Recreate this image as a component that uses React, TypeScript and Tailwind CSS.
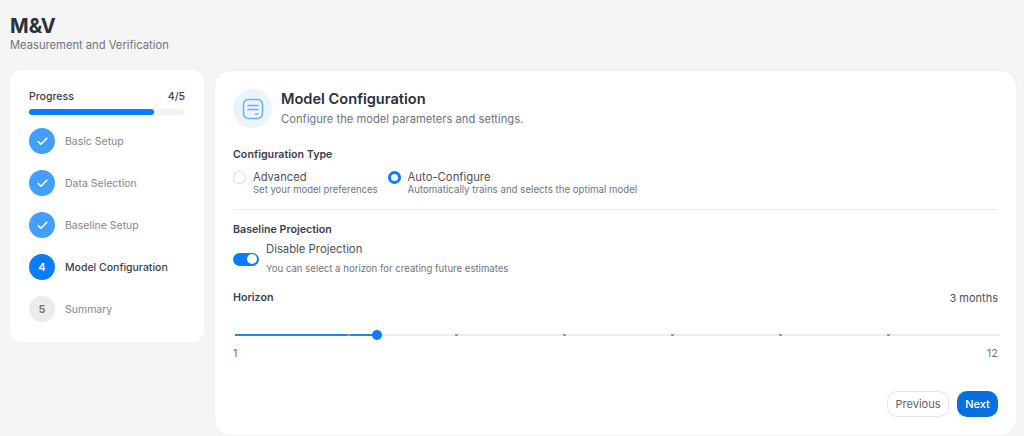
import { Check } from "lucide-react";

const STEPS = [
  { label: "Basic Setup", state: "done" },
  { label: "Data Selection", state: "done" },
  { label: "Baseline Setup", state: "done" },
  { label: "Model Configuration", state: "active" },
  { label: "Summary", state: "todo" },
];

const TICKS = [112, 220, 328, 436, 544, 652];

function Step({ label, state, n }: { label: string; state: string; n: number }) {
  return (
    <div className="flex h-[26px] items-center gap-[10px]">
      {state === "done" && (
        <div className="flex h-[26px] w-[26px] items-center justify-center rounded-full bg-[#429fff]">
          <Check className="h-[13px] w-[13px] text-white" strokeWidth={3} />
        </div>
      )}
      {state === "active" && (
        <div className="flex h-[26px] w-[26px] items-center justify-center rounded-full bg-[#0a7cff] text-[11px] font-semibold text-white">
          {n}
        </div>
      )}
      {state === "todo" && (
        <div className="flex h-[26px] w-[26px] items-center justify-center rounded-full bg-[#ececec] text-[11px] font-semibold text-[#71717a]">
          {n}
        </div>
      )}
      <span className={state === "active" ? "pt-[2px] text-[10.5px] font-medium text-[#3a3f4d]" : "pt-[2px] text-[10.5px] font-normal text-[#85858f]"}>
        {label}
      </span>
    </div>
  );
}

function Sidebar() {
  return (
    <aside className="h-[272px] w-[194px] shrink-0 rounded-xl bg-white px-[19px] pt-[19px]">
      <div className="flex h-[14px] items-center justify-between pt-[2px] text-[10.5px] font-medium text-[#3a3f4d]">
        <span>Progress</span>
        <span>4/5</span>
      </div>
      <div className="mt-[6px] h-[6px] w-full rounded-full bg-[#f3f3f4]">
        <div className="h-full w-[80%] rounded-full bg-[#0a7cff]" />
      </div>
      <div className="mt-[13px] flex flex-col gap-4">
        {STEPS.map((s, i) => (
          <Step key={s.label} label={s.label} state={s.state} n={i + 1} />
        ))}
      </div>
    </aside>
  );
}

function FormIcon() {
  return (
    <svg width="22" height="22" viewBox="0 0 22 22" fill="none" stroke="#6aaef5" strokeWidth="1.5" strokeLinecap="round">
      <rect x="1.5" y="1.5" width="19" height="19" rx="5" />
      <path d="M6 7.5h10M6 11.5h10M13.5 16h2.5" />
    </svg>
  );
}

function Slider() {
  return (
    <div className="relative mt-[29px] ml-[2px] h-[2px] w-[765px] bg-[#ececee]">
      <div className="h-full w-[142px] bg-[#2c83dc]" />
      {TICKS.map((t) => (
        <span key={t} className="absolute top-0 h-[2px] w-[3px] bg-[#9a9a9f]" style={{ left: t }} />
      ))}
      <span className="absolute left-[137px] top-[-4px] h-[10px] w-[10px] rounded-full bg-[#0a7cff]" />
    </div>
  );
}

export default function App() {
  return (
    <div className="h-[436px] w-[1024px] overflow-hidden bg-[#f5f5f6] pl-[10px] pt-[14px] font-['Inter',sans-serif]">
      <h1 className="text-[20px] leading-[24px] font-bold text-[#2b3040]">M&amp;V</h1>
      <p className="text-[11.2px] leading-[14px] text-[#73737d]">Measurement and Verification</p>

      <div className="mt-[18px] flex gap-[11px]">
        <Sidebar />

        <main className="h-[366px] w-[803px] -ml-px rounded-2xl border border-[#f0f0f1] bg-white px-[18px] pt-[18px]">
          <div className="flex items-center gap-[9px]">
            <div className="flex h-[39px] w-[39px] items-center justify-center rounded-full bg-[#eaf4fe]">
              <FormIcon />
            </div>
            <div>
              <h2 className="text-[14.6px] leading-[20px] font-semibold text-[#2b3040]">Model Configuration</h2>
              <p className="mt-[1px] text-[11.2px] leading-[18px] text-[#73737d]">Configure the model parameters and settings.</p>
            </div>
          </div>

          <h3 className="mt-[20px] text-[10.7px] leading-[14px] font-semibold text-[#3a3f4d]">Configuration Type</h3>
          <div className="mt-[8px] flex gap-[10px]">
            <label className="flex gap-[7px]">
              <span className="mt-[1px] h-[13px] w-[13px] rounded-full border border-[#d9d9dc] bg-white" />
              <span>
                <span className="block text-[11.2px] leading-[14px] text-[#4d515c]">Advanced</span>
                <span className="block text-[9.5px] leading-[12px] text-[#73737d]">Set your model preferences</span>
              </span>
            </label>
            <label className="flex gap-[7px]">
              <span className="mt-[1px] h-[13px] w-[13px] rounded-full border-[3.5px] border-[#0a7cff] bg-white" />
              <span>
                <span className="block text-[11.3px] leading-[14px] text-[#4d515c]">Auto-Configure</span>
                <span className="block text-[9.7px] leading-[12px] text-[#73737d]">Automatically trains and selects the optimal model</span>
              </span>
            </label>
          </div>

          <hr className="mt-[13px] border-[#ebebed]" />

          <h3 className="mt-[13px] text-[10.7px] leading-[14px] font-semibold text-[#3a3f4d]">Baseline Projection</h3>
          <div className="mt-[5px] flex items-center gap-[7px]">
            <div className="flex h-[13px] w-[26px] items-center justify-end rounded-full bg-[#0a7cff] pr-[2px]">
              <span className="h-[10px] w-[10px] rounded-full bg-white" />
            </div>
            <div>
              <p className="text-[11.3px] leading-[14px] text-[#4d515c]">Disable Projection</p>
              <p className="mt-[6px] text-[9.6px] leading-[14px] text-[#73737d]">You can select a horizon for creating future estimates</p>
            </div>
          </div>

          <div className="mt-[14px] flex items-center justify-between">
            <h3 className="text-[10.7px] leading-[14px] font-semibold text-[#3a3f4d]">Horizon</h3>
            <span className="mt-[1px] text-[11px] leading-[14px] text-[#4d515c]">3 months</span>
          </div>

          <Slider />

          <div className="mt-[10px] flex justify-between text-[11px] leading-[14px] text-[#73737d]">
            <span>1</span>
            <span>12</span>
          </div>

          <div className="mt-[31px] flex justify-end gap-2">
            <button className="h-[26px] w-[62px] rounded-[10px] border border-[#e6e6e8] bg-white text-[11px] font-normal text-[#5d606b]">
              Previous
            </button>
            <button className="h-[26px] w-[41px] rounded-[10px] bg-[#0670de] text-[11px] font-medium text-white">
              Next
            </button>
          </div>
        </main>
      </div>
    </div>
  );
}
